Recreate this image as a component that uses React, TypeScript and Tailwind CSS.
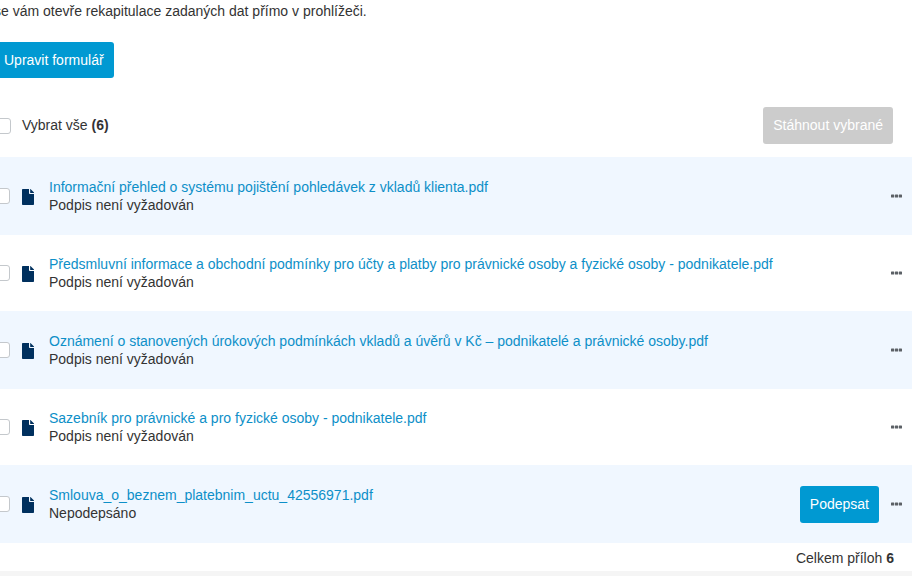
import React, { useState } from 'react';

interface Attachment {
  id: number;
  name: string;
  status: string;
  canSign?: boolean;
}

const attachments: Attachment[] = [
  { id: 1, name: 'Informační přehled o systému pojištění pohledávek z vkladů klienta.pdf', status: 'Podpis není vyžadován' },
  { id: 2, name: 'Předsmluvní informace a obchodní podmínky pro účty a platby pro právnické osoby a fyzické osoby - podnikatele.pdf', status: 'Podpis není vyžadován' },
  { id: 3, name: 'Oznámení o stanovených úrokových podmínkách vkladů a úvěrů v Kč – podnikatelé a právnické osoby.pdf', status: 'Podpis není vyžadován' },
  { id: 4, name: 'Sazebník pro právnické a pro fyzické osoby - podnikatele.pdf', status: 'Podpis není vyžadován' },
  { id: 5, name: 'Smlouva_o_beznem_platebnim_uctu_42556971.pdf', status: 'Nepodepsáno', canSign: true },
];

const checkboxClass = 'block h-4 w-4 shrink-0 appearance-none rounded-[3px] border border-[#c4c8cc] bg-white checked:border-[#0099d2] checked:bg-[#0099d2]';

const FileIcon = () => (
  <svg width="12" height="18" viewBox="0 0 12 18" fill="#00305e" className="shrink-0" aria-hidden="true">
    <path d="M0.8 2H7v4.2a.8.8 0 0 0 .8.8H12v10.2a.8.8 0 0 1-.8.8H.8a.8.8 0 0 1-.8-.8V2.8A.8.8 0 0 1 .8 2z" />
    <path d="M8.2 2h.3L12 5.5v.4H8.2z" />
  </svg>
);

const DotsIcon = () => (
  <svg width="11" height="4" viewBox="0 0 11 4" fill="#5c6166" aria-hidden="true">
    <rect y="0.4" width="3.2" height="3.2" rx="0.6" />
    <rect x="3.9" y="0.4" width="3.2" height="3.2" rx="0.6" />
    <rect x="7.8" y="0.4" width="3.2" height="3.2" rx="0.6" />
  </svg>
);

const App: React.FC = () => {
  const [selected, setSelected] = useState<number[]>([]);
  const allSelected = selected.length === attachments.length;

  const toggle = (id: number) => {
    setSelected(prev => (prev.includes(id) ? prev.filter(x => x !== id) : [...prev, id]));
  };

  return (
    <div className="min-h-screen overflow-hidden bg-[#f5f5f5] font-['Liberation_Sans',Arial,sans-serif] text-sm leading-[18px] text-[#333]">
      <main className="bg-white pb-1">
        <p className="-ml-1.5 pt-0.5">se vám otevře rekapitulace zadaných dat přímo v prohlížeči.</p>

        <button type="button" className="-ml-1.5 mt-[22px] block h-9 rounded-[3px] bg-[#0099d2] px-2.5 text-white">
          Upravit formulář
        </button>

        <div className="mt-[29px] flex items-center justify-between pr-[19px]">
          <label className="-ml-[5px] flex items-center gap-[11px]">
            <input
              type="checkbox"
              className={checkboxClass}
              checked={allSelected}
              onChange={() => setSelected(allSelected ? [] : attachments.map(a => a.id))}
            />
            <span className="pb-px">Vybrat vše <b>(6)</b></span>
          </label>
          <button type="button" disabled={selected.length === 0} className="h-[37px] rounded-[3px] bg-[#0099d2] px-2.5 pb-px text-white disabled:bg-[#ccc]">
            Stáhnout vybrané
          </button>
        </div>

        <ul className="mt-[13px]">
          {attachments.map(file => (
            <li key={file.id} className="flex items-center pr-2.5 odd:h-[78px] odd:bg-[#f0f7ff] even:h-[76px]">
              <input
                type="checkbox"
                aria-label={file.name}
                className={`${checkboxClass} -ml-1.5 mr-3`}
                checked={selected.includes(file.id)}
                onChange={() => toggle(file.id)}
              />
              <FileIcon />
              <div className="ml-[15px] min-w-0 flex-1">
                <a href="#" className="block text-[#0d8fc8] hover:underline">{file.name}</a>
                <span className="block">{file.status}</span>
              </div>
              {file.canSign && (
                <button type="button" className="mr-3 h-[37px] rounded-[3px] bg-[#0099d2] px-2.5 pb-px text-white">Podepsat</button>
              )}
              <button type="button" aria-label="Další možnosti">
                <DotsIcon />
              </button>
            </li>
          ))}
        </ul>

        <p className="mt-1.5 pr-[18px] text-right">Celkem příloh <b>6</b></p>
      </main>
    </div>
  );
};

export default App;
